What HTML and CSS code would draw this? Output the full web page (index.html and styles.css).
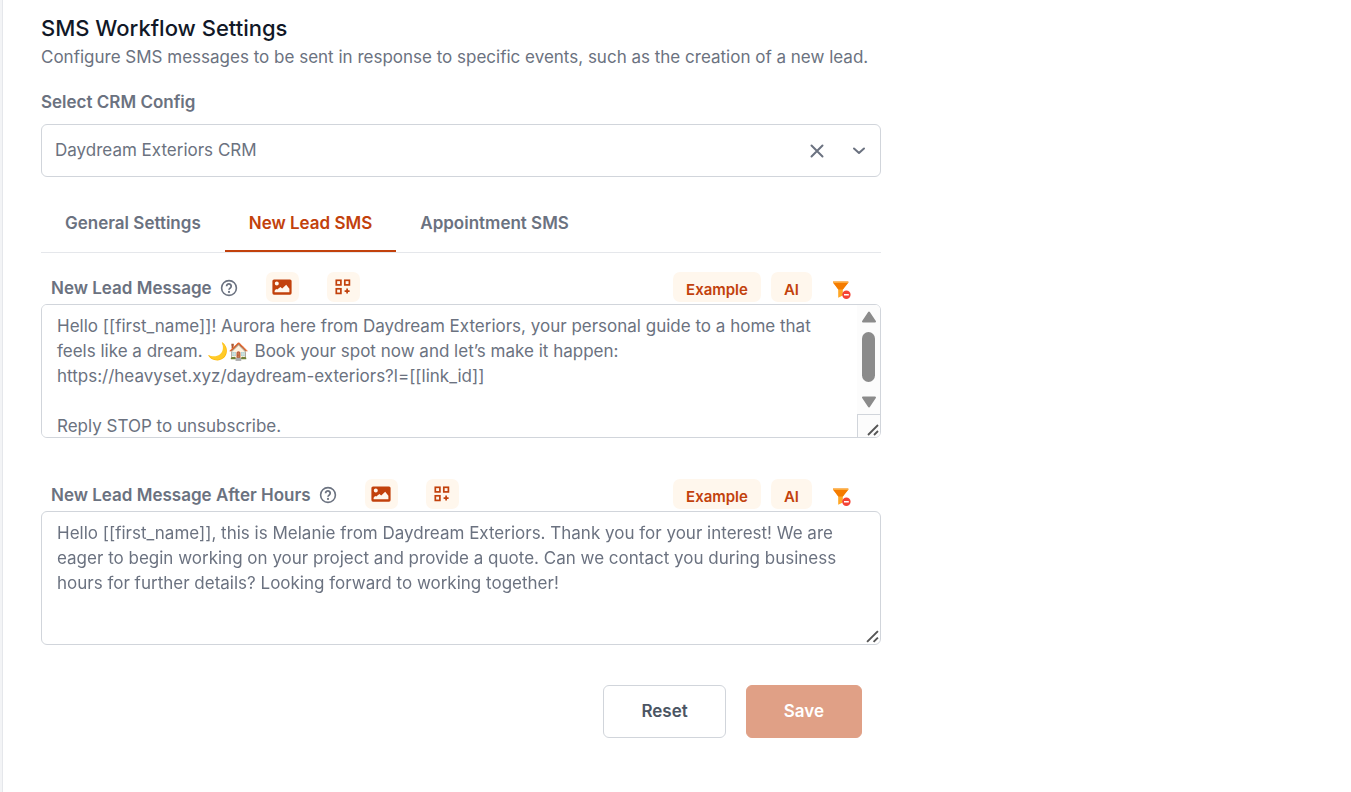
FILE: index.html
```
<!DOCTYPE html>
<html lang="en">
<head>
    <meta charset="UTF-8">
    <meta name="viewport" content="width=device-width, initial-scale=1.0">
    <title>SMS Workflow Settings</title>
    <link rel="stylesheet" href="styles.css">
</head>
<body>
    <svg class="sprite" aria-hidden="true">
        <symbol id="icon-help" viewBox="0 0 18 18">
            <circle cx="9" cy="9" r="7.4" fill="none" stroke="currentColor" stroke-width="1.6"/>
            <path d="M6.6 7.300a2.300 2.300 0 1 1 3.700 1.700c-.8.6-1.300.9-1.300 1.800" fill="none" stroke="currentColor" stroke-width="1.800"/>
            <circle cx="9" cy="12.900" r="1.100" fill="currentColor"/>
        </symbol>
        <symbol id="icon-image" viewBox="0 0 20 16">
            <path fill="currentColor" fill-rule="evenodd" d="M2 .5h16a1.600 1.600 0 0 1 1.600 1.600v12a1.600 1.600 0 0 1-1.600 1.600H2A1.600 1.600 0 0 1 .4 14.100v-12A1.600 1.600 0 0 1 2 .5zM4.800 2.600a2 2 0 1 0 0 4 2 2 0 0 0 0-4zM2.600 13.200h14.800V9.800l-3.200-4-4 3.600-1.800-1.400-3.200 2.600-1.100-.6-1.500 1.700z"/>
        </symbol>
        <symbol id="icon-widgets" viewBox="0 0 16 16">
            <g fill="none" stroke="currentColor" stroke-width="1.700">
                <rect x="1.300" y="1.300" width="4.600" height="4.600"/>
                <rect x="9.800" y="1.300" width="4.600" height="4.600"/>
                <rect x="1.300" y="9.800" width="4.600" height="4.600"/>
                <path d="M12.100 9.600v5M9.600 12.100h5"/>
            </g>
        </symbol>
        <symbol id="icon-filter" viewBox="0 0 19 18">
            <path fill="#ffa726" d="M1.500 1.500 6.200 8.600v8.100l4.600-2.200V8.600l5.200-7.100z"/>
            <path fill="#f57c00" d="M1 .6h15.300v1.200l-5.400 6.600H6.400L1 1.800z"/>
            <path fill="#ffb74d" d="M1 .6h15.300v1.200H1z"/>
            <circle cx="14.400" cy="13.700" r="4.200" fill="#f44336"/>
            <path fill="#fff" d="M12 13h4.800v1.500H12z"/>
        </symbol>
        <symbol id="icon-grip" viewBox="0 0 12 12">
            <path d="M1 11 11 1M7 11l4-4" fill="none" stroke="#555" stroke-width="1.800"/>
        </symbol>
    </svg>

    <main class="page">
        <form class="settings">
            <h1 class="title">SMS Workflow Settings</h1>
            <p class="subtitle">Configure SMS messages to be sent in response to specific events, such as the creation of a new lead.</p>

            <label class="label" for="crm">Select CRM Config</label>
            <div class="select">
                <select id="crm">
                    <option>Daydream Exteriors CRM</option>
                </select>
                <button type="button" class="select-clear" aria-label="Clear selection">
                    <svg width="16" height="16" viewBox="0 0 16 16"><path d="M2.500 2.500l11 11M13.500 2.500l-11 11"/></svg>
                </button>
                <svg class="select-arrow" width="14" height="10" viewBox="0 0 14 10"><path d="M2 2.500l5 4.500 5-4.500"/></svg>
            </div>

            <nav class="tabs">
                <a href="#general" class="tab">General Settings</a>
                <a href="#new-lead" class="tab active" aria-current="page">New Lead SMS</a>
                <a href="#appointment" class="tab">Appointment SMS</a>
            </nav>

            <section class="message">
                <div class="toolbar">
                    <label class="label" for="message">New Lead Message</label>
                    <svg class="help" role="img" aria-label="Help"><use href="#icon-help"/></svg>
                    <button type="button" class="chip icon" aria-label="Add image"><svg width="20" height="16"><use href="#icon-image"/></svg></button>
                    <button type="button" class="chip icon" aria-label="Add field"><svg width="16" height="16"><use href="#icon-widgets"/></svg></button>
                    <div class="actions">
                        <button type="button" class="chip">Example</button>
                        <button type="button" class="chip">AI</button>
                        <button type="button" class="filter" aria-label="Clear filter"><svg width="19" height="18"><use href="#icon-filter"/></svg></button>
                    </div>
                </div>
                <div class="field">
                    <textarea id="message" class="scrolling">Hello [[first_name]]! Aurora here from Daydream Exteriors, your personal guide to a home that feels like a dream. 🌙🏠 Book your spot now and let’s make it happen: https://heavyset.xyz/daydream-exteriors?l=[[link_id]]

Reply STOP to unsubscribe.</textarea>
                    <div class="scrollbar" aria-hidden="true">
                        <svg width="16" height="12" viewBox="0 0 16 12"><path d="M8 1.500 14 10.500H2z"/></svg>
                        <div class="thumb"></div>
                        <svg width="16" height="12" viewBox="0 0 16 12"><path d="M8 10.500 14 1.500H2z"/></svg>
                    </div>
                    <svg class="grip boxed"><use href="#icon-grip"/></svg>
                </div>
            </section>

            <section class="message">
                <div class="toolbar">
                    <label class="label" for="after-hours">New Lead Message After Hours</label>
                    <svg class="help" role="img" aria-label="Help"><use href="#icon-help"/></svg>
                    <button type="button" class="chip icon" aria-label="Add image"><svg width="20" height="16"><use href="#icon-image"/></svg></button>
                    <button type="button" class="chip icon" aria-label="Add field"><svg width="16" height="16"><use href="#icon-widgets"/></svg></button>
                    <div class="actions">
                        <button type="button" class="chip">Example</button>
                        <button type="button" class="chip">AI</button>
                        <button type="button" class="filter" aria-label="Clear filter"><svg width="19" height="18"><use href="#icon-filter"/></svg></button>
                    </div>
                </div>
                <div class="field">
                    <textarea id="after-hours">Hello [[first_name]], this is Melanie from Daydream Exteriors. Thank you for your interest! We are eager to begin working on your project and provide a quote. Can we contact you during business hours for further details? Looking forward to working together!</textarea>
                    <svg class="grip"><use href="#icon-grip"/></svg>
                </div>
            </section>

            <div class="footer">
                <button type="reset" class="btn">Reset</button>
                <button type="submit" class="btn primary" disabled>Save</button>
            </div>
        </form>
    </main>
</body>
</html>
```
FILE: styles.css
```
* {
    margin: 0;
    padding: 0;
    box-sizing: border-box;
}

body {
    min-height: 100vh;
    background: #f3f4f6;
    padding-left: 2px;
    color: #6b7280;
    font-family: Inter, "Noto Color Emoji", sans-serif;
    font-size: 17px;
    line-height: 25px;
}

button,
select,
textarea {
    font: inherit;
    color: inherit;
}

button {
    border: none;
    background: none;
    cursor: pointer;
}

.sprite {
    position: absolute;
    width: 0;
    height: 0;
}

.page {
    min-height: 100vh;
    padding: 14px 38px;
    background: #fff;
    border-left: 1px solid #e5e7eb;
}

.settings {
    max-width: 840px;
}

.title {
    color: #111827;
    font-size: 22px;
    font-weight: 500;
    line-height: 29px;
}

.subtitle {
    margin-top: 2px;
    margin-bottom: 20px;
}

.label {
    font-weight: 600;
}

/* crm select */
.select {
    position: relative;
    margin-top: 9px;
}

.select select {
    display: block;
    width: 100%;
    height: 53px;
    padding: 0 13px;
    border: 1px solid #d1d5db;
    border-radius: 6px;
    background: #fff;
    appearance: none;
}

.select svg {
    display: block;
    fill: none;
    stroke: #6b7280;
    stroke-width: 2;
    stroke-linecap: round;
    stroke-linejoin: round;
}

.select-clear {
    position: absolute;
    top: 19px;
    right: 56px;
}

.select .select-arrow {
    position: absolute;
    top: 22px;
    right: 15px;
    pointer-events: none;
}

/* tabs */
.tabs {
    display: flex;
    margin-top: 17px;
    margin-bottom: 19px;
    border-bottom: 1px solid #e5e7eb;
}

.tab {
    padding: 17px 24px 14px;
    border-bottom: 2px solid transparent;
    color: #6b7280;
    font-weight: 600;
    text-decoration: none;
}

.tab.active {
    color: #c2410c;
    border-color: #c2410c;
}

/* messages */
.message {
    margin-bottom: 41px;
}

.toolbar {
    display: flex;
    align-items: center;
    height: 32px;
    padding: 0 30px 2px 10px;
}

.toolbar .label,
.help {
    margin-top: 2px;
}

.help {
    width: 18px;
    height: 18px;
    margin-left: 8px;
}

.chip {
    height: 30px;
    padding: 4px 13px 0;
    border-radius: 7px;
    background: #fff7ed;
    color: #c2410c;
    font-size: 15px;
    font-weight: 600;
}

.chip.icon {
    display: flex;
    align-items: center;
    justify-content: center;
    width: 33px;
    padding: 0;
    margin-left: 28px;
}

.actions {
    display: flex;
    align-items: center;
    gap: 10px;
    margin-left: auto;
}

.filter {
    padding: 6px 0 0 10px;
}

.filter svg {
    display: block;
}

.field {
    position: relative;
}

.field textarea {
    display: block;
    width: 100%;
    height: 134px;
    padding: 9px 15px;
    border: 1px solid #d1d5db;
    border-radius: 6px;
    background: #fff;
    resize: vertical;
}

.field textarea::-webkit-resizer {
    background: transparent;
}

.field .scrolling {
    padding-right: 38px;
    scrollbar-width: none;
}

/* scrollbar laid over the right edge of the textarea */
.scrollbar {
    position: absolute;
    top: 1px;
    right: 1px;
    bottom: 24px;
    display: flex;
    flex-direction: column;
    align-items: center;
    width: 23px;
    padding: 6px 0;
    border-radius: 0 5px 0 0;
    background: #fcfcfc;
    pointer-events: none;
}

.scrollbar svg {
    fill: #8b8b8b;
    stroke: #8b8b8b;
    stroke-width: 2;
    stroke-linejoin: round;
}

.scrollbar .thumb {
    width: 13px;
    height: 50px;
    margin: 9px 0 auto;
    border-radius: 7px;
    background: #8b8b8b;
}

.grip {
    position: absolute;
    right: 1px;
    bottom: 1px;
    width: 23px;
    height: 23px;
    padding: 9px 1px 1px 9px;
    pointer-events: none;
}

.grip.boxed {
    border-top: 1px solid #d1d5db;
    border-left: 1px solid #d1d5db;
    border-radius: 0 0 5px 0;
    background: #fcfcfc;
}

/* footer */
.footer {
    display: flex;
    justify-content: flex-end;
    gap: 20px;
    margin-top: -1px;
    padding-right: 19px;
}

.btn {
    height: 53px;
    padding: 0 37px;
    border: 1px solid #d1d5db;
    border-radius: 6px;
    background: #fff;
    color: #4b5563;
    font-weight: 600;
}

.btn.primary {
    border-color: #e0a086;
    background: #e0a086;
    color: #fff;
}
```
